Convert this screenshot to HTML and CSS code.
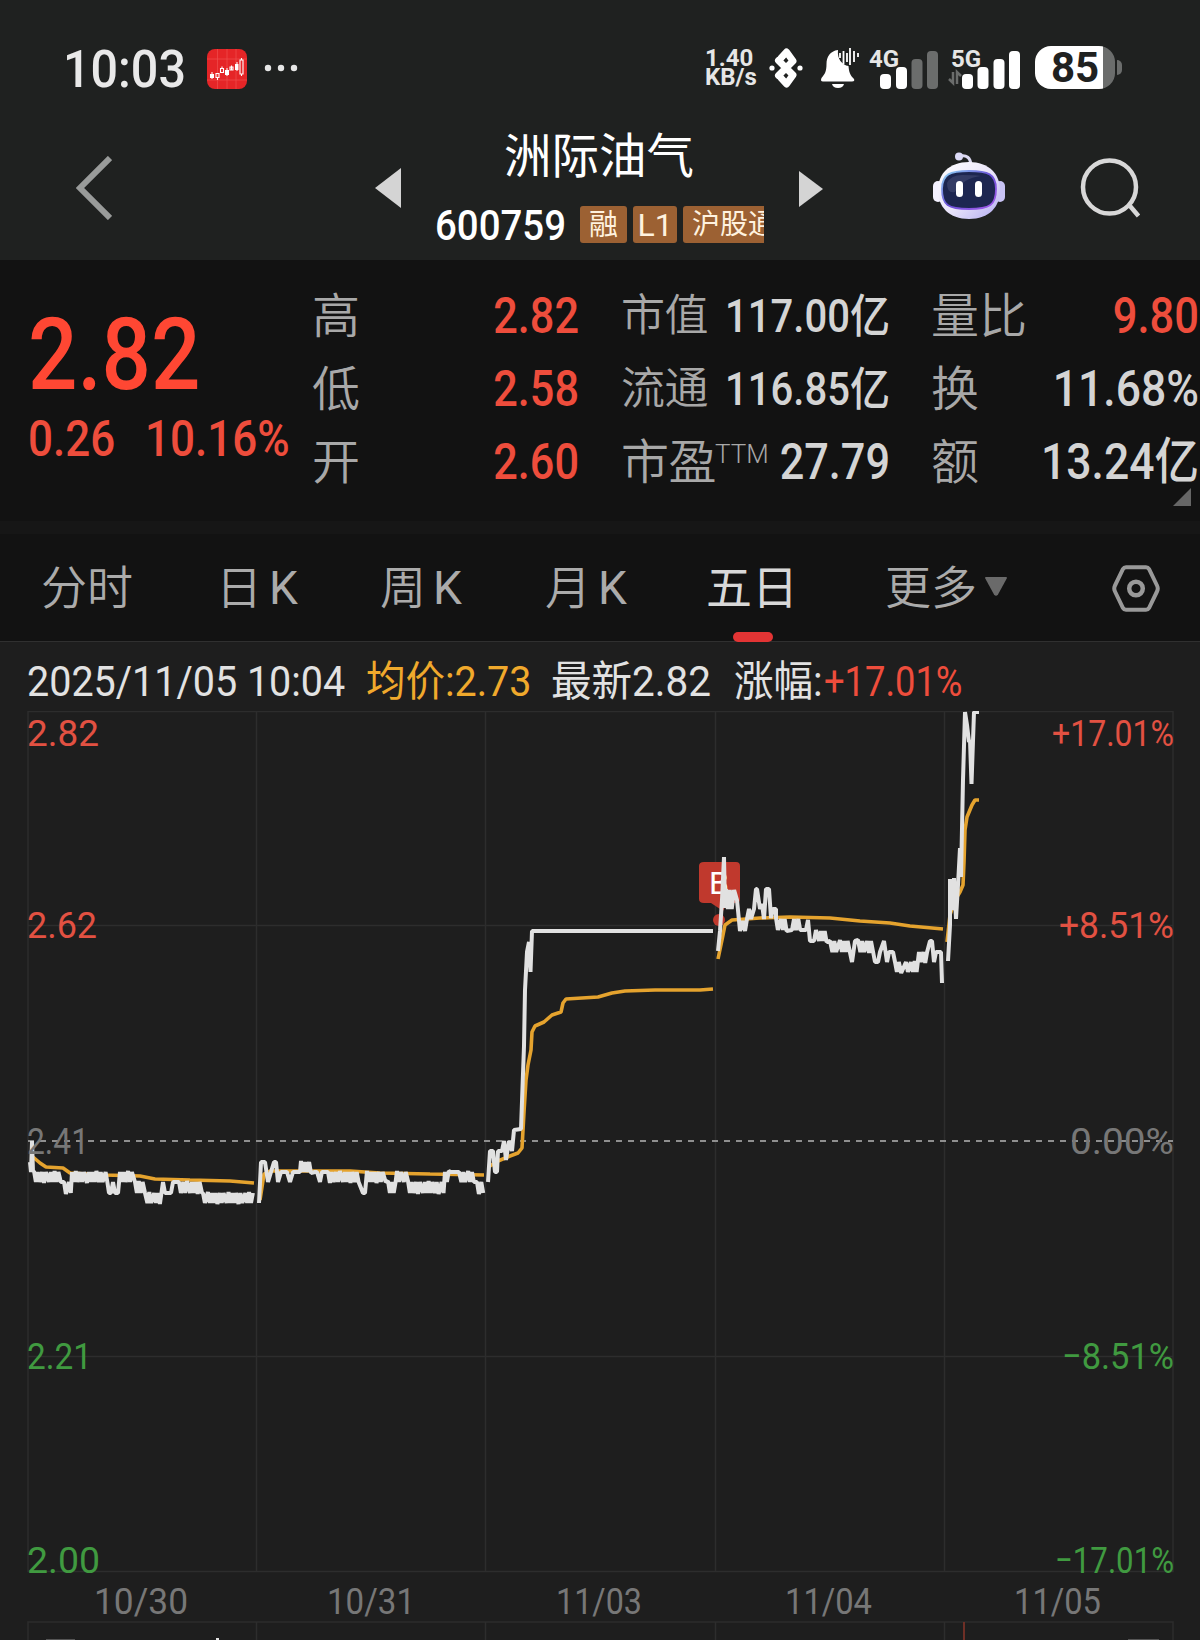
FILE: index.html
```html
<!DOCTYPE html>
<html lang="zh-CN">

<head>
    <meta charset="UTF-8">
    <meta name="viewport" content="width=device-width, initial-scale=1.0">
    <title>洲际油气 600759</title>
    <link rel="stylesheet" href="styles.css">
</head>

<body>
    <div class="status-bar">
        <span class="clock">10:03</span>
        <svg class="app-icon" width="40" height="40" viewBox="0 0 40 40">
            <rect width="40" height="40" rx="8" fill="#e52527"/>
            <path d="M10.5 0V40M20 0V40M29 0V40M0 10H40M0 31H40" stroke="#ef4d4d" stroke-width=".7"/>
            <path d="M5 23v7M20 19v8M30 13v9" stroke="#fff" stroke-width="1"/>
            <path d="M3 25h4v4H3zM18 21h4v5h-4zM28 15h3.5v6H28z" fill="#fff"/>
            <path d="M9 24.500h3v4H9zM13.500 19.500h3v4h-3zM23 18h3v3h-3zM33 11h3v14h-3zM10.500 29v2M15 17.500v2M24.500 16.500v5M34.500 9v2M34.500 25v2" fill="none" stroke="#fff" stroke-width="1.100"/>
        </svg>
        <svg class="more-dots" width="34" height="8" viewBox="0 0 34 8" fill="#e6e6e6">
            <circle cx="4" cy="4" r="3.200"/><circle cx="17" cy="4" r="3.200"/><circle cx="30" cy="4" r="3.200"/>
        </svg>

        <div class="net-speed"><span>1.40</span><span>KB/s</span></div>
        <svg class="bluetooth" width="34" height="42" viewBox="0 0 34 42">
            <path d="M9.500 13.500L24 28L17.500 37L12 31M12 11L17.500 5L24 14L9.500 28.500" fill="none" stroke="#fff" stroke-width="7" stroke-linejoin="round" stroke-linecap="round"/>
            <circle cx="3" cy="21" r="2.600" fill="#fff"/><circle cx="31" cy="21" r="2.600" fill="#fff"/>
        </svg>
        <svg class="bell" width="40" height="42" viewBox="0 0 40 42">
            <path d="M18 3C10 4 6.500 10 6.500 17C6.500 24 5 27 1.500 31Q0 34.500 3 34.500H32Q35 34.500 34 32C30 28 29 25 28.500 19C22 18 17 12 18 3Z" fill="#fff"/>
            <path d="M12 37H24Q23 41 18 41Q13 41 12 37Z" fill="#fff"/>
            <path d="M20 6v5M23.500 4v13M27 6v9M30 1v17M34 4v11M38 6v4" stroke="#fff" stroke-width="1.800"/>
        </svg>
        <div class="signal signal-4g">
            <span class="net-type">4G</span>
            <svg width="59" height="38" viewBox="0 0 59 38" fill="#fff">
                <rect x="0" y="23" width="11" height="15" rx="4"/><rect x="16" y="16" width="11" height="22" rx="4"/>
                <rect x="31.500" y="8" width="11" height="30" rx="4" fill="#6b6d6c"/><rect x="47" y="0" width="11" height="38" rx="4" fill="#6b6d6c"/>
            </svg>
        </div>
        <div class="signal signal-5g">
            <span class="net-type">5G</span>
            <svg width="73" height="38" viewBox="0 0 73 38" fill="#fff">
                <path d="M5 21v11L1 28M9 33V21l4 4" fill="none" stroke="#6b6d6c" stroke-width="2.500"/>
                <rect x="14" y="23" width="11" height="15" rx="4"/><rect x="29.500" y="16" width="11" height="22" rx="4"/>
                <rect x="45.500" y="8" width="11" height="30" rx="4"/><rect x="61" y="0" width="11" height="38" rx="4"/>
            </svg>
        </div>
        <div class="battery"><span>85</span></div>
    </div>

    <div class="header">
        <svg class="back" width="36" height="64" viewBox="0 0 36 64">
            <path d="M34 2L4 32L34 62" fill="none" stroke="#999b9a" stroke-width="6"/>
        </svg>
        <svg class="prev" width="26" height="40" viewBox="0 0 26 40"><path d="M0 20L26 0V40Z" fill="#d4d4d4"/></svg>
        <div class="stock">
            <h1>洲际油气</h1>
            <div class="stock-info">
                <span class="code">600759</span>
                <span class="tag">融</span>
                <span class="tag tag-l1">L1</span>
                <span class="tag tag-last">沪股通</span>
            </div>
        </div>
        <svg class="next" width="24" height="36" viewBox="0 0 24 36"><path d="M24 18L0 0V36Z" fill="#d4d4d4"/></svg>
        <svg class="robot" width="72" height="68" viewBox="0 0 72 68">
            <defs>
                <linearGradient id="shell" x1="0" y1="0" x2="1" y2="1">
                    <stop offset="0" stop-color="#ffffff"/><stop offset=".55" stop-color="#e8e3fa"/><stop offset="1" stop-color="#b0aaf0"/>
                </linearGradient>
                <linearGradient id="rim" x1="0" y1="0" x2="1" y2="1">
                    <stop offset="0" stop-color="#8fd8f5"/><stop offset=".5" stop-color="#6a50d8"/><stop offset="1" stop-color="#a65bea"/>
                </linearGradient>
            </defs>
            <path d="M27 4Q37 2 38 13" fill="none" stroke="#dcd9f2" stroke-width="3"/>
            <circle cx="26" cy="4.500" r="4" fill="#dcdaf6"/>
            <rect x="0" y="29" width="10" height="21" rx="5" fill="#f4f2ff"/><rect x="62" y="29" width="10" height="21" rx="5" fill="#c8c3f4"/>
            <path d="M36 10C56 10 67 22 67 38C67 55 56 67 36 67C16 67 5 55 5 38C5 22 16 10 36 10Z" fill="url(#shell)"/>
            <path d="M36 19C55 19 63 22 63 37C63 53 57 57 36 57C15 57 9 53 9 37C9 22 17 19 36 19Z" fill="#1d2650" stroke="url(#rim)" stroke-width="1.800"/>
            <path d="M14 31Q18 23 29 23Q42 23 48 24Q30 26 22 40Q14 42 14 31Z" fill="#4a5078" opacity=".5"/>
            <rect x="23" y="29" width="7" height="16" rx="3.500" fill="#fff"/><rect x="42" y="29" width="7" height="16" rx="3.500" fill="#fff"/>
        </svg>
        <svg class="search" width="60" height="60" viewBox="0 0 60 60" fill="none" stroke="#d8d8d8" stroke-width="4.500">
            <ellipse cx="29.500" cy="29" rx="26.500" ry="26.500"/><path d="M50 48L58.500 58"/>
        </svg>
    </div>

    <div class="quote">
        <div class="price">
            <div class="price-now">2.82</div>
            <div class="price-change"><span class="change">0.26</span><span class="change-rate">10.16%</span></div>
        </div>
        <div class="stats stats-1">
            <div class="stat"><span class="label">高</span><span class="num red">2.82</span></div>
            <div class="stat"><span class="label">低</span><span class="num red">2.58</span></div>
            <div class="stat"><span class="label">开</span><span class="num red">2.60</span></div>
        </div>
        <div class="stats stats-2">
            <div class="stat"><span class="label small">市值</span><span class="num cap">117.00亿</span></div>
            <div class="stat"><span class="label small">流通</span><span class="num cap">116.85亿</span></div>
            <div class="stat"><span class="label">市盈</span><span class="ttm">TTM</span><span class="num">27.79</span></div>
        </div>
        <div class="stats stats-3">
            <div class="stat"><span class="label">量比</span><span class="num red">9.80</span></div>
            <div class="stat"><span class="label">换</span><span class="num">11.68%</span></div>
            <div class="stat"><span class="label">额</span><span class="num">13.24亿</span></div>
        </div>
        <span class="corner"></span>
    </div>

    <div class="tabs">
        <span class="tab">分时</span>
        <span class="tab">日<i>K</i></span>
        <span class="tab">周<i>K</i></span>
        <span class="tab">月<i>K</i></span>
        <span class="tab active">五日</span>
        <span class="tab">更多<svg class="arrow" width="22" height="20" viewBox="0 0 22 20"><path d="M0 1Q0 0 1 0H21Q22 0 22 1L13 17.500Q11 20 9 17.500Z" fill="#6a6a6a"/></svg></span>
        <svg class="settings" width="48" height="47" viewBox="0 0 48 47" fill="none" stroke="#999">
            <path d="M14 2.200H34Q36 2.200 37 4L45 20.500Q46.500 23.500 45 26.500L37 43Q36 44.800 34 44.800H14Q12 44.800 11 43L3 26.500Q1.500 23.500 3 20.500L11 4Q12 2.200 14 2.200Z" stroke-width="4"/>
            <circle cx="24" cy="23.500" r="6.800" stroke-width="4.500"/>
        </svg>
    </div>

    <div class="summary">
        <span class="s-date">2025/11/05 10:04</span>
        <span class="s-avg">均价:2.73</span>
        <span class="s-last">最新2.82</span>
        <span class="s-rate">涨幅:</span>
        <span class="s-rate-value">+17.01%</span>
    </div>

    <svg class="chart" width="1200" height="929" viewBox="0 711 1200 929">
        <g class="grid">
            <path d="M28 711.500H1173V1571.500H28ZM28 925.500H1173M28 1356.500H1173"/>
            <path d="M256.500 711V1571M485.500 711V1571M715.500 711V1571M944.500 711V1571"/>
            <path d="M28 1640V1622H1173V1640M256.500 1622V1640M485.500 1622V1640M715.500 1622V1640M944.500 1622V1640"/>
        </g>
        <path d="M28 1141H1173" stroke="#8f8f8f" stroke-width="1.800" stroke-dasharray="6 6"/>
        <g class="marker">
            <path d="M704 862H736Q740 862 740 866V899Q740 903 736 903H727L723 911L711 903H704Q699 903 699 899V866Q699 862 704 862Z"/>
            <circle cx="719" cy="920" r="6"/>
            <text x="709" y="894">B</text>
        </g>
        <g id="lines"></g>
        <g class="axis">
            <text class="up" x="27" y="746" textLength="72" lengthAdjust="spacingAndGlyphs">2.82</text>
            <text class="up" x="27" y="938" textLength="70" lengthAdjust="spacingAndGlyphs">2.62</text>
            <text class="flat" x="27" y="1154" textLength="62" lengthAdjust="spacingAndGlyphs">2.41</text>
            <text class="down" x="27" y="1369" textLength="65" lengthAdjust="spacingAndGlyphs">2.21</text>
            <text class="down" x="27" y="1573" textLength="73" lengthAdjust="spacingAndGlyphs">2.00</text>
            <text class="up" x="1052" y="746" textLength="122" lengthAdjust="spacingAndGlyphs">+17.01%</text>
            <text class="up" x="1059" y="938" textLength="115" lengthAdjust="spacingAndGlyphs">+8.51%</text>
            <text class="flat" x="1070" y="1154" textLength="104" lengthAdjust="spacingAndGlyphs">0.00%</text>
            <text class="down" x="1062" y="1369" textLength="112" lengthAdjust="spacingAndGlyphs">−8.51%</text>
            <text class="down" x="1055" y="1573" textLength="119" lengthAdjust="spacingAndGlyphs">−17.01%</text>
            <text class="day" x="94" y="1614" textLength="94" lengthAdjust="spacingAndGlyphs">10/30</text>
            <text class="day" x="327" y="1614" textLength="88" lengthAdjust="spacingAndGlyphs">10/31</text>
            <text class="day" x="556" y="1614" textLength="86" lengthAdjust="spacingAndGlyphs">11/03</text>
            <text class="day" x="785" y="1614" textLength="87" lengthAdjust="spacingAndGlyphs">11/04</text>
            <text class="day" x="1014" y="1614" textLength="87" lengthAdjust="spacingAndGlyphs">11/05</text>
        </g>
        <path d="M964 1622V1640" stroke="#6e2f26" stroke-width="2"/>
        <path d="M46 1639.500H75M1128 1639.500H1159" stroke="#555"/>
        <path d="M217.500 1638V1640" stroke="#e2e2e2" stroke-width="3"/>
    </svg>

    <script src="chart.js"></script>
</body>

</html>
```
FILE: styles.css
```css
* {
    box-sizing: border-box;
}

body {
    margin: 0;
    width: 1200px;
    height: 1640px;
    overflow: hidden;
    background-color: #1e1e1e;
    color: #d4d4d4;
    font-family: Roboto, "Noto Sans CJK SC", sans-serif;
}

svg {
    display: block;
    flex: none;
}

/* status bar */
.status-bar {
    display: flex;
    align-items: flex-start;
    height: 120px;
    padding: 46px 0 0 63px;
    background-color: #1f2120;
}

.clock {
    width: 144px;
    font-size: 51px;
    font-weight: 500;
    line-height: 47px;
    color: #e9e9e9;
    transform: scaleX(0.95);
    transform-origin: left;
}

.app-icon {
    margin-top: 3px;
}

.more-dots {
    margin: 18px 0 0 17px;
}

.net-speed {
    display: flex;
    flex-direction: column;
    width: 62px;
    margin-left: 407px;
    padding-top: 3px;
    font-size: 24px;
    font-weight: 700;
    line-height: 19px;
    color: #e6e6e6;
}

.bluetooth {
    margin: 1px 0 0 2px;
}

.bell {
    margin: 1px 0 0 17px;
}

.signal {
    position: relative;
    padding-top: 5px;
}

.signal-4g {
    margin-left: 20px;
}

.signal-5g {
    margin-left: 9px;
}

.net-type {
    position: absolute;
    top: 2px;
    left: -11px;
    font-size: 24px;
    font-weight: 700;
    line-height: 22px;
    color: #e6e6e6;
}

.signal-5g .net-type {
    left: 3px;
}

.battery {
    position: relative;
    width: 80px;
    height: 43px;
    margin-left: 14px;
    border-radius: 16px;
    background: linear-gradient(to right, #fff 68px, #6b6d6c 68px);
    color: #1f2120;
    font-size: 42px;
    font-weight: 700;
    line-height: 44px;
    text-align: center;
}

.battery::after {
    content: "";
    position: absolute;
    top: 14px;
    right: -7px;
    width: 5px;
    height: 15px;
    border-radius: 0 5px 5px 0;
    background-color: #6b6d6c;
}

/* header */
.header {
    display: flex;
    align-items: flex-start;
    height: 140px;
    padding-left: 76px;
    background-color: #1f2120;
}

.back {
    margin-top: 36px;
}

.prev {
    margin: 48px 0 0 263px;
}

.stock {
    width: 364px;
    margin-left: 34px;
}

.stock h1 {
    margin: 10px 0 0 69px;
    font-size: 47.5px;
    font-weight: 400;
    line-height: 54px;
    color: #fff;
}

.stock-info {
    display: flex;
    width: 329px;
    height: 44px;
    margin-top: 22px;
    overflow: hidden;
}

.code {
    flex: none;
    width: 145px;
    font-size: 42px;
    font-weight: 500;
    line-height: 40px;
    color: #fff;
    transform: scaleX(0.915);
    transform-origin: left;
}

.tag {
    flex: none;
    width: 47px;
    height: 37px;
    margin-right: 6px;
    border-radius: 3px;
    background-color: #9c6133;
    color: #fff2df;
    font-size: 29px;
    line-height: 38px;
    text-align: center;
}

.tag-l1 {
    width: 44px;
    font-size: 32px;
}

.tag-last {
    width: 110px;
    padding-left: 9px;
    font-size: 28px;
    text-align: left;
}

.next {
    margin: 51px 0 0 0;
}

.robot {
    margin: 32px 0 0 110px;
}

.search {
    margin: 38px 0 0 75px;
}

/* quote */
.quote {
    position: relative;
    display: grid;
    grid-template-columns: 312px 267px 42px 269px 41px 268px;
    height: 274px;
    padding-top: 20px;
    border-bottom: 13px solid #161616;
    background-color: #121212;
}

.price {
    padding-left: 28px;
    color: #ff4733;
}

.price-now {
    margin-top: 25px;
    font-size: 100px;
    font-weight: 500;
    line-height: 100px;
    transform: scaleX(0.87);
    transform-origin: left;
}

.price-change {
    display: flex;
    margin-top: 9px;
    font-size: 50px;
    font-weight: 500;
    line-height: 50px;
    color: #ee4d3c;
}

.change,
.change-rate {
    width: 117px;
    transform: scaleX(0.88);
    transform-origin: left;
}

.stats-2 {
    grid-column: 4;
}

.stats-3 {
    grid-column: 6;
}

.stat {
    display: flex;
    align-items: center;
    height: 73px;
    white-space: nowrap;
}

.label {
    font-size: 48px;
    line-height: 71px;
    color: #a8a8a8;
    font-weight: 350;
}

.label.small {
    font-size: 44px;
}

.ttm {
    margin-top: -18px;
    margin-left: -1px;
    font-size: 26px;
    font-weight: 300;
    color: #a8a8a8;
}

.stats-2 .label {
    letter-spacing: -0.5px;
}

.num {
    width: 0;
    margin-left: auto;
    display: flex;
    justify-content: flex-end;
    font-size: 50px;
    font-weight: 500;
    line-height: 73px;
    transform: scaleX(0.865);
    transform-origin: right;
}

.stats-3 .num {
    transform: scaleX(0.89);
}

.stats-3 .red {
    transform: scaleX(0.87);
}

.num.cap {
    font-size: 46px;
    transform: scaleX(0.87);
}

.red {
    color: #ee4d3c;
}

.corner {
    position: absolute;
    right: 9px;
    bottom: 15px;
    border-left: 18px solid transparent;
    border-bottom: 18px solid #666;
}

/* tabs */
.tabs {
    display: grid;
    grid-template-columns: 175px 164px 165px 162px 178px 227px 48px;
    height: 108px;
    padding-left: 41px;
    border-bottom: 1px solid #303030;
    background-color: #121212;
}

.tab {
    position: relative;
    display: flex;
    font-size: 46px;
    font-weight: 350;
    line-height: 108px;
    color: #ababab;
}

.tab i {
    margin-left: 7px;
    font-style: normal;
    font-weight: 400;
}

.tab.active {
    left: -1px;
    color: #d8d8d8;
    font-weight: 400;
}

.tab.active::after {
    content: "";
    position: absolute;
    left: 27px;
    bottom: 0;
    width: 40px;
    height: 10px;
    border-radius: 5px;
    background-color: #e33434;
}

.arrow {
    margin: 43px 0 0 8px;
}

.settings {
    margin-top: 31px;
}

/* summary line above the chart */
.summary {
    display: flex;
    height: 69px;
    padding-left: 27px;
    font-size: 42px;
    line-height: 80px;
    white-space: nowrap;
    color: #e2e2e2;
}

.summary span {
    flex: none;
    transform: scaleX(0.94);
    transform-origin: left;
}

.summary .s-date {
    width: 339px;
}

.summary .s-avg {
    width: 185px;
    color: #f0a92c;
}

.summary .s-last {
    width: 183px;
    transform: scaleX(0.965);
}

.summary .s-rate {
    width: 90px;
}

.summary .s-rate-value {
    color: #ee4d3c;
    transform: scaleX(0.865);
}

/* chart */
.grid path {
    fill: none;
    stroke: #2d2d2d;
    stroke-width: 1.5;
}

.marker {
    fill: #c0392d;
}

.marker text {
    fill: #fff;
    font-size: 32px;
}

.axis text {
    font-size: 37px;
}

.axis .up {
    fill: #e25142;
}

.axis .flat,
.axis .day {
    fill: #777;
}

.axis .down {
    fill: #409a40;
}

.line-avg,
.line-price {
    fill: none;
    stroke-linejoin: bevel;
}

.line-avg {
    stroke: #e5a32e;
    stroke-width: 3.6;
}

.line-price {
    stroke: #e1e1e1;
    stroke-width: 4;
}
```
FILE: chart.js
```javascript
// [x, y] is a point, [x0, x1, yHigh, yLow] is a stretch where the price ticks between two levels
var price = [
    [[30, 1162], [31, 1172], [32, 1141], [33, 1172], [34, 62, 1172, 1182], [64, 71, 1182, 1193], [72, 108, 1172, 1182], [109, 1193], [111, 1193], [113, 1182], [115, 1193], [118, 1193], [120, 134, 1172, 1182], [135, 144, 1182, 1193], [145, 161, 1193, 1203], [163, 1182], [165, 1193], [171, 1193], [173, 1182], [178, 1182], [179, 203, 1182, 1193], [203, 254, 1193, 1203]],
    [[259, 1203], [261, 1162], [265, 1162], [268, 1182], [271, 1172], [274, 1162], [276, 1162], [278, 1182], [281, 1172], [287, 1172], [290, 1182], [293, 1172], [300, 1172], [301, 312, 1162, 1172], [315, 1172], [317, 323, 1172, 1182], [326, 1172], [328, 360, 1172, 1182], [363, 1193], [365, 1193], [367, 386, 1172, 1182], [388, 396, 1182, 1193], [397, 407, 1172, 1182], [408, 444, 1182, 1193], [445, 449, 1172, 1182], [451, 1172], [458, 1172], [459, 475, 1172, 1182], [477, 484, 1182, 1193]],
    [[488, 1182], [490, 1151], [493, 1151], [495, 1172], [497, 1172], [498, 1151], [502, 1151], [504, 1141], [506, 1160], [509, 1141], [512, 1151], [514, 1130], [521, 1129], [524, 1046], [525, 990], [527, 952], [529, 942], [530.5, 972], [532, 931], [713, 931]],
    [[718, 951], [720, 931], [722, 900], [724, 857], [725, 908], [726, 735, 890, 909], [737, 900], [740, 931], [743, 921], [745, 931], [747, 919], [749, 909], [751, 919], [754, 909], [756, 889], [757, 889], [760, 909], [762, 904], [764, 919], [766, 889], [769, 889], [771, 918], [773, 909], [776, 909], [776, 787, 919, 930], [792, 930], [794, 801, 919, 930], [806, 930], [808, 920], [810, 941], [814, 941], [816, 828, 931, 941], [830, 837, 941, 952], [840, 848, 941, 952], [852, 962], [855, 941], [858, 872, 941, 952], [875, 962], [878, 962], [880, 952], [884, 941], [887, 962], [889, 952], [893, 952], [895, 903, 962, 972], [906, 918, 962, 972], [919, 928, 952, 962], [930, 941], [932, 941], [934, 962], [936, 952], [941, 952], [942, 983]],
    [[948, 961], [950, 925], [950, 879], [952, 910], [954, 878], [956, 919], [958, 885], [960, 848], [961, 877], [963, 780], [965, 712], [967, 725], [969, 742], [970, 740], [971.5, 784], [974, 712], [979, 712]]
];

var average = [
    [[33, 1157], [40, 1163], [46, 1167], [63, 1168], [70, 1173], [105, 1175], [140, 1176], [155, 1179], [190, 1180], [230, 1181], [254, 1183]],
    [[260, 1200], [264, 1174], [270, 1171], [350, 1171], [380, 1173], [430, 1174], [484, 1175]],
    [[490, 1166], [498, 1161], [510, 1156], [518, 1153], [522, 1148], [524, 1112], [526, 1080], [528, 1065], [531, 1050], [532, 1032], [535, 1026], [544, 1022], [552, 1015], [561, 1012], [563, 1003], [566, 999], [598, 997], [612, 993], [625, 991], [655, 990], [700, 990], [713, 989]],
    [[718, 959], [722, 940], [725, 925], [732, 920], [760, 918], [790, 917], [830, 918], [860, 921], [890, 923], [910, 926], [943, 929]],
    [[947, 942], [950, 915], [955, 900], [960, 892], [963, 885], [964, 862], [965, 830], [967, 817], [972, 805], [975, 800], [979, 800]]
];

// uneven distance between ticks, so that the stretches don't look like a solid bar
var steps = [1.9, 1.9, 1.9, 2.4, 1.9, 1.9, 3, 1.9, 1.9];

function addLine(className, data) {
    var points = [];
    var n = 0;
    data.forEach(function (p) {
        if (p.length === 2) {
            points.push(p.join(','));
            return;
        }
        var low = false;
        for (var x = p[0]; x <= p[1]; x += steps[n++ % steps.length]) {
            // every few ticks the stroke pokes out a little
            var poke = n % 5 === 0 ? 1 : 0;
            points.push(x.toFixed(1) + ',' + (low ? p[3] + poke : p[2] - poke));
            low = !low;
        }
    });
    var line = document.createElementNS('http://www.w3.org/2000/svg', 'polyline');
    line.setAttribute('class', className);
    line.setAttribute('points', points.join(' '));
    document.getElementById('lines').appendChild(line);
}

average.forEach(function (day) { addLine('line-avg', day); });
price.forEach(function (day) { addLine('line-price', day); });
```
